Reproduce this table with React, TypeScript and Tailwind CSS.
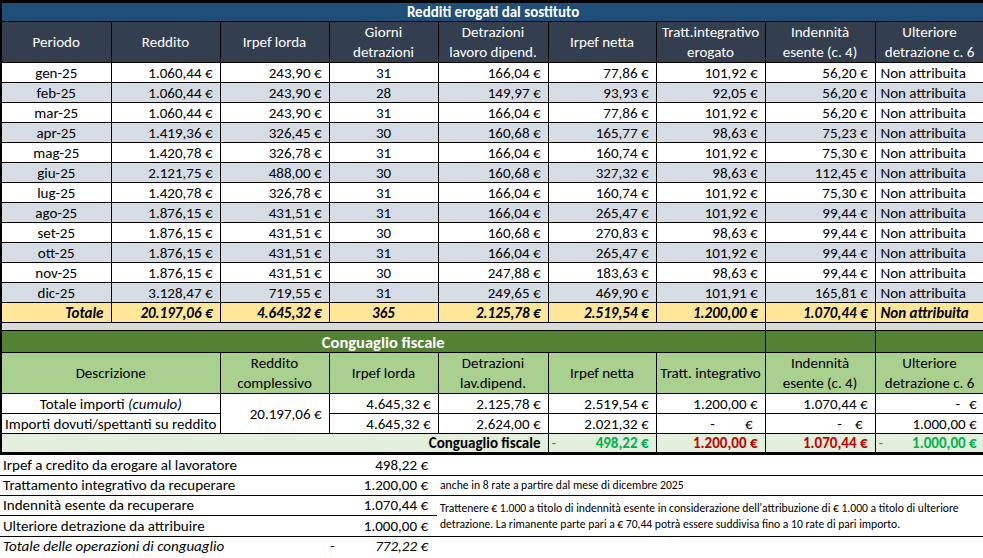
import React from "react";

const rows: string[][] = [
  ["gen-25", "1.060,44 €", "243,90 €", "31", "166,04 €", "77,86 €", "101,92 €", "56,20 €"],
  ["feb-25", "1.060,44 €", "243,90 €", "28", "149,97 €", "93,93 €", "92,05 €", "56,20 €"],
  ["mar-25", "1.060,44 €", "243,90 €", "31", "166,04 €", "77,86 €", "101,92 €", "56,20 €"],
  ["apr-25", "1.419,36 €", "326,45 €", "30", "160,68 €", "165,77 €", "98,63 €", "75,23 €"],
  ["mag-25", "1.420,78 €", "326,78 €", "31", "166,04 €", "160,74 €", "101,92 €", "75,30 €"],
  ["giu-25", "2.121,75 €", "488,00 €", "30", "160,68 €", "327,32 €", "98,63 €", "112,45 €"],
  ["lug-25", "1.420,78 €", "326,78 €", "31", "166,04 €", "160,74 €", "101,92 €", "75,30 €"],
  ["ago-25", "1.876,15 €", "431,51 €", "31", "166,04 €", "265,47 €", "101,92 €", "99,44 €"],
  ["set-25", "1.876,15 €", "431,51 €", "30", "160,68 €", "270,83 €", "98,63 €", "99,44 €"],
  ["ott-25", "1.876,15 €", "431,51 €", "31", "166,04 €", "265,47 €", "101,92 €", "99,44 €"],
  ["nov-25", "1.876,15 €", "431,51 €", "30", "247,88 €", "183,63 €", "98,63 €", "99,44 €"],
  ["dic-25", "3.128,47 €", "719,55 €", "31", "249,65 €", "469,90 €", "101,91 €", "165,81 €"],
];

const widths = [110, 109, 109, 109, 110, 108, 109, 110, 109];

function Dash({ gap }: { gap: string }) {
  return (
    <div className="flex justify-end items-center">
      <span>-</span>
      <span className={gap}></span>
      <span>€</span>
    </div>
  );
}

export default function App() {
  const cell = "border border-black p-0 h-[20px] leading-[18px] whitespace-nowrap overflow-hidden";
  const num = cell + " text-right pr-[7px]";
  const ctr = cell + " text-center";
  return (
    <div className="w-[983px] h-[558px] bg-white overflow-hidden text-black [font-family:Carlito,Calibri,Lato,sans-serif] text-[15px]">
      <table className="table-fixed border-collapse w-[983px] border-l-2 border-black">
        <colgroup>
          {widths.map((w, i) => (
            <col key={i} style={{ width: w }} />
          ))}
        </colgroup>
        <tbody>
          <tr>
            <td colSpan={9} className="border-t-[3px] border-b border-black bg-[#1f4e79] text-white font-bold text-center h-[20px] leading-[18px] p-0">
              Redditi erogati dal sostituto
            </td>
          </tr>
          <tr className="bg-[#333f4f] text-white">
            <td className={ctr + " h-[40px]"}>Periodo</td>
            <td className={ctr + " h-[40px]"}>Reddito</td>
            <td className={ctr + " h-[40px]"}>Irpef lorda</td>
            <td className={ctr + " h-[40px] whitespace-normal leading-[20px]"}>Giorni<br />detrazioni</td>
            <td className={ctr + " h-[40px] whitespace-normal leading-[20px]"}>Detrazioni<br />lavoro dipend.</td>
            <td className={ctr + " h-[40px]"}>Irpef netta</td>
            <td className={ctr + " h-[40px] whitespace-normal leading-[20px]"}>Tratt.integrativo<br />erogato</td>
            <td className={ctr + " h-[40px] whitespace-normal leading-[20px]"}>Indennità<br />esente (c. 4)</td>
            <td className={ctr + " h-[40px] whitespace-normal leading-[20px]"}>Ulteriore<br />detrazione c. 6</td>
          </tr>
          {rows.map((r, i) => (
            <tr key={r[0]} className={i % 2 === 1 ? "bg-[#d6dce4]" : "bg-white"}>
              <td className={ctr}>{r[0]}</td>
              <td className={num}>{r[1]}</td>
              <td className={num}>{r[2]}</td>
              <td className={ctr}>{r[3]}</td>
              <td className={num}>{r[4]}</td>
              <td className={num}>{r[5]}</td>
              <td className={num}>{r[6]}</td>
              <td className={num}>{r[7]}</td>
              <td className={cell + " pl-[5px]"}>Non attribuita</td>
            </tr>
          ))}
          <tr className="bg-[#ffe699] font-bold italic">
            <td className={num}>Totale</td>
            <td className={num}>20.197,06 €</td>
            <td className={num}>4.645,32 €</td>
            <td className={ctr}>365</td>
            <td className={num}>2.125,78 €</td>
            <td className={num}>2.519,54 €</td>
            <td className={num}>1.200,00 €</td>
            <td className={num}>1.070,44 €</td>
            <td className={cell + " pl-[5px]"}>Non attribuita</td>
          </tr>
          <tr className="bg-[#d9d9d9]">
            <td colSpan={7} className="border border-black h-[8px] p-0"></td>
            <td className="border border-black h-[8px] p-0"></td>
            <td className="border border-black h-[8px] p-0"></td>
          </tr>
          <tr className="bg-[#548235] text-white">
            <td colSpan={7} className="border border-black h-[22px] p-0 text-center font-bold text-[16.5px] leading-[20px]">
              Conguaglio fiscale
            </td>
            <td className="border border-black p-0"></td>
            <td className="border border-black p-0"></td>
          </tr>
          <tr className="bg-[#a9d08e]">
            <td colSpan={2} className={ctr + " h-[40px]"}>Descrizione</td>
            <td className={ctr + " h-[40px] whitespace-normal leading-[20px]"}>Reddito<br />complessivo</td>
            <td className={ctr + " h-[40px]"}>Irpef lorda</td>
            <td className={ctr + " h-[40px] whitespace-normal leading-[20px]"}>Detrazioni<br />lav.dipend.</td>
            <td className={ctr + " h-[40px]"}>Irpef netta</td>
            <td className={ctr + " h-[40px]"}>Tratt. integrativo</td>
            <td className={ctr + " h-[40px] whitespace-normal leading-[20px]"}>Indennità<br />esente (c. 4)</td>
            <td className={ctr + " h-[40px] whitespace-normal leading-[20px]"}>Ulteriore<br />detrazione c. 6</td>
          </tr>
          <tr className="bg-white">
            <td colSpan={2} className={ctr}>
              Totale importi <span className="italic">(cumulo)</span>
            </td>
            <td rowSpan={2} className={num}>20.197,06 €</td>
            <td className={num}>4.645,32 €</td>
            <td className={num}>2.125,78 €</td>
            <td className={num}>2.519,54 €</td>
            <td className={num}>1.200,00 €</td>
            <td className={num}>1.070,44 €</td>
            <td className={cell + " pr-[7px]"}>
              <Dash gap="w-[9px]" />
            </td>
          </tr>
          <tr className="bg-white">
            <td colSpan={2} className={cell + " text-center"}>Importi dovuti/spettanti su reddito</td>
            <td className={num}>4.645,32 €</td>
            <td className={num}>2.624,00 €</td>
            <td className={num}>2.021,32 €</td>
            <td className={cell + " pr-[12px]"}>
              <Dash gap="w-[30px]" />
            </td>
            <td className={cell + " pr-[12px]"}>
              <Dash gap="w-[13px]" />
            </td>
            <td className={num}>1.000,00 €</td>
          </tr>
          <tr className="bg-[#e2efda] font-bold">
            <td colSpan={5} className={num + " border-b-[3px] pr-[3px]"}>Conguaglio fiscale</td>
            <td className={cell + " border-b-[3px] text-[#00b050]"}>
              <div className="flex justify-between pl-[3px] pr-[7px]">
                <span className="font-normal">-</span>
                <span>498,22 €</span>
              </div>
            </td>
            <td className={num + " border-b-[3px] text-[#c00000]"}>1.200,00 €</td>
            <td className={num + " border-b-[3px] text-[#c00000]"}>1.070,44 €</td>
            <td className={cell + " border-b-[3px] text-[#00b050]"}>
              <div className="flex justify-between pl-[3px] pr-[7px]">
                <span className="font-normal">-</span>
                <span>1.000,00 €</span>
              </div>
            </td>
          </tr>
        </tbody>
      </table>
      <table className="table-fixed border-collapse w-[983px]">
        <colgroup>
          <col style={{ width: 328 }} />
          <col style={{ width: 109 }} />
          <col style={{ width: 546 }} />
        </colgroup>
        <tbody>
          <tr>
            <td className="border-b border-black h-[20px] p-0 pl-[3px] leading-[18px] whitespace-nowrap">Irpef a credito da erogare al lavoratore</td>
            <td className="border-b border-black h-[20px] p-0 pr-[9px] text-right leading-[18px]">498,22 €</td>
            <td className="border-b border-black h-[20px] p-0"></td>
          </tr>
          <tr>
            <td className="border-b border-black h-[20px] p-0 pl-[3px] leading-[18px] whitespace-nowrap">Trattamento integrativo da recuperare</td>
            <td className="border-b border-black h-[20px] p-0 pr-[9px] text-right leading-[18px]">1.200,00 €</td>
            <td className="border-b border-black h-[20px] p-0 pl-[3px] text-[11.7px] leading-[18px] whitespace-nowrap">
              anche in 8 rate a partire dal mese di dicembre 2025
            </td>
          </tr>
          <tr>
            <td className="border-b border-black h-[20px] p-0 pl-[3px] leading-[18px] whitespace-nowrap">Indennità esente da recuperare</td>
            <td className="border-b border-black h-[20px] p-0 pr-[9px] text-right leading-[18px]">1.070,44 €</td>
            <td rowSpan={2} className="border-b border-black p-0 pl-[3px] text-[11.6px] leading-[16px] whitespace-nowrap align-middle">
              Trattenere € 1.000 a titolo di indennità esente in considerazione dell'attribuzione di € 1.000 a titolo di ulteriore
              <br />
              detrazione. La rimanente parte pari a € 70,44 potrà essere suddivisa fino a 10 rate di pari importo.
            </td>
          </tr>
          <tr>
            <td className="border-b border-black h-[21px] p-0 pl-[3px] leading-[18px] whitespace-nowrap">Ulteriore detrazione da attribuire</td>
            <td className="border-b border-black h-[21px] p-0 pr-[9px] text-right leading-[18px]">1.000,00 €</td>
          </tr>
          <tr className="italic">
            <td className="h-[20px] p-0 pl-[3px] leading-[18px] whitespace-nowrap">Totale delle operazioni di conguaglio</td>
            <td className="h-[20px] p-0 pr-[9px] leading-[18px]">
              <div className="flex justify-between pl-[2px]">
                <span className="not-italic">-</span>
                <span>772,22 €</span>
              </div>
            </td>
            <td className="p-0"></td>
          </tr>
        </tbody>
      </table>
    </div>
  );
}
